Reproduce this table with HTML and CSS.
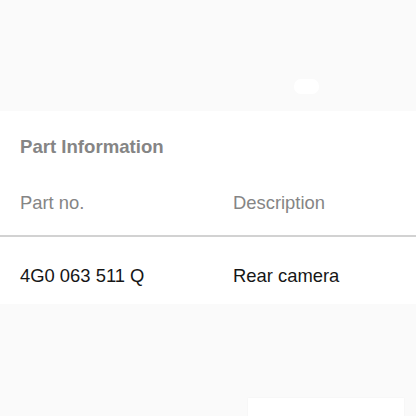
FILE: index.html
```html
<!DOCTYPE html>
<html lang="en">
<head>
<meta charset="utf-8">
<title>Part Information</title>
<link rel="stylesheet" href="styles.css">
</head>
<body>
<div class="top"><span class="pill"></span></div>
<section class="panel">
  <h2 class="title">Part Information</h2>
  <div class="row head">
    <div class="c1">Part no.</div>
    <div class="c2">Description</div>
  </div>
  <div class="row data">
    <div class="c1">4G0 063 511 Q</div>
    <div class="c2">Rear camera</div>
  </div>
</section>
<div class="bottom"><div class="card"></div></div>
</body>
</html>
```
FILE: styles.css
```css
html, body {
  margin: 0;
  padding: 0;
  background: #fafafa;
  font-family: "Liberation Sans", Arial, sans-serif;
  font-size: 18.4px;
  line-height: 24px;
  overflow: hidden;
}
.top {
  height: 111px;
  box-sizing: border-box;
  padding: 79px 0 0 294px;
}
.pill {
  display: block;
  width: 25px;
  height: 15px;
  border-radius: 7px;
  background: #ffffff;
}
.panel {
  background: #ffffff;
  padding: 24px 0 16px 0;
}
.title {
  margin: 0 0 32px 20px;
  font-size: 18.6px;
  line-height: 24px;
  font-weight: bold;
  color: #858585;
}
.row {
  display: flex;
  padding-left: 20px;
}
.c1 { width: 213px; }
.head {
  color: #858585;
  padding-bottom: 20px;
  border-bottom: 2px solid #d2d2d2;
}
.data {
  color: #161616;
  padding-top: 27px;
}
.bottom {
  padding: 94px 0 0 248px;
}
.card {
  width: 156px;
  height: 30px;
  background: #ffffff;
  box-shadow: 0 0 2px rgba(0,0,0,0.04);
}
```
